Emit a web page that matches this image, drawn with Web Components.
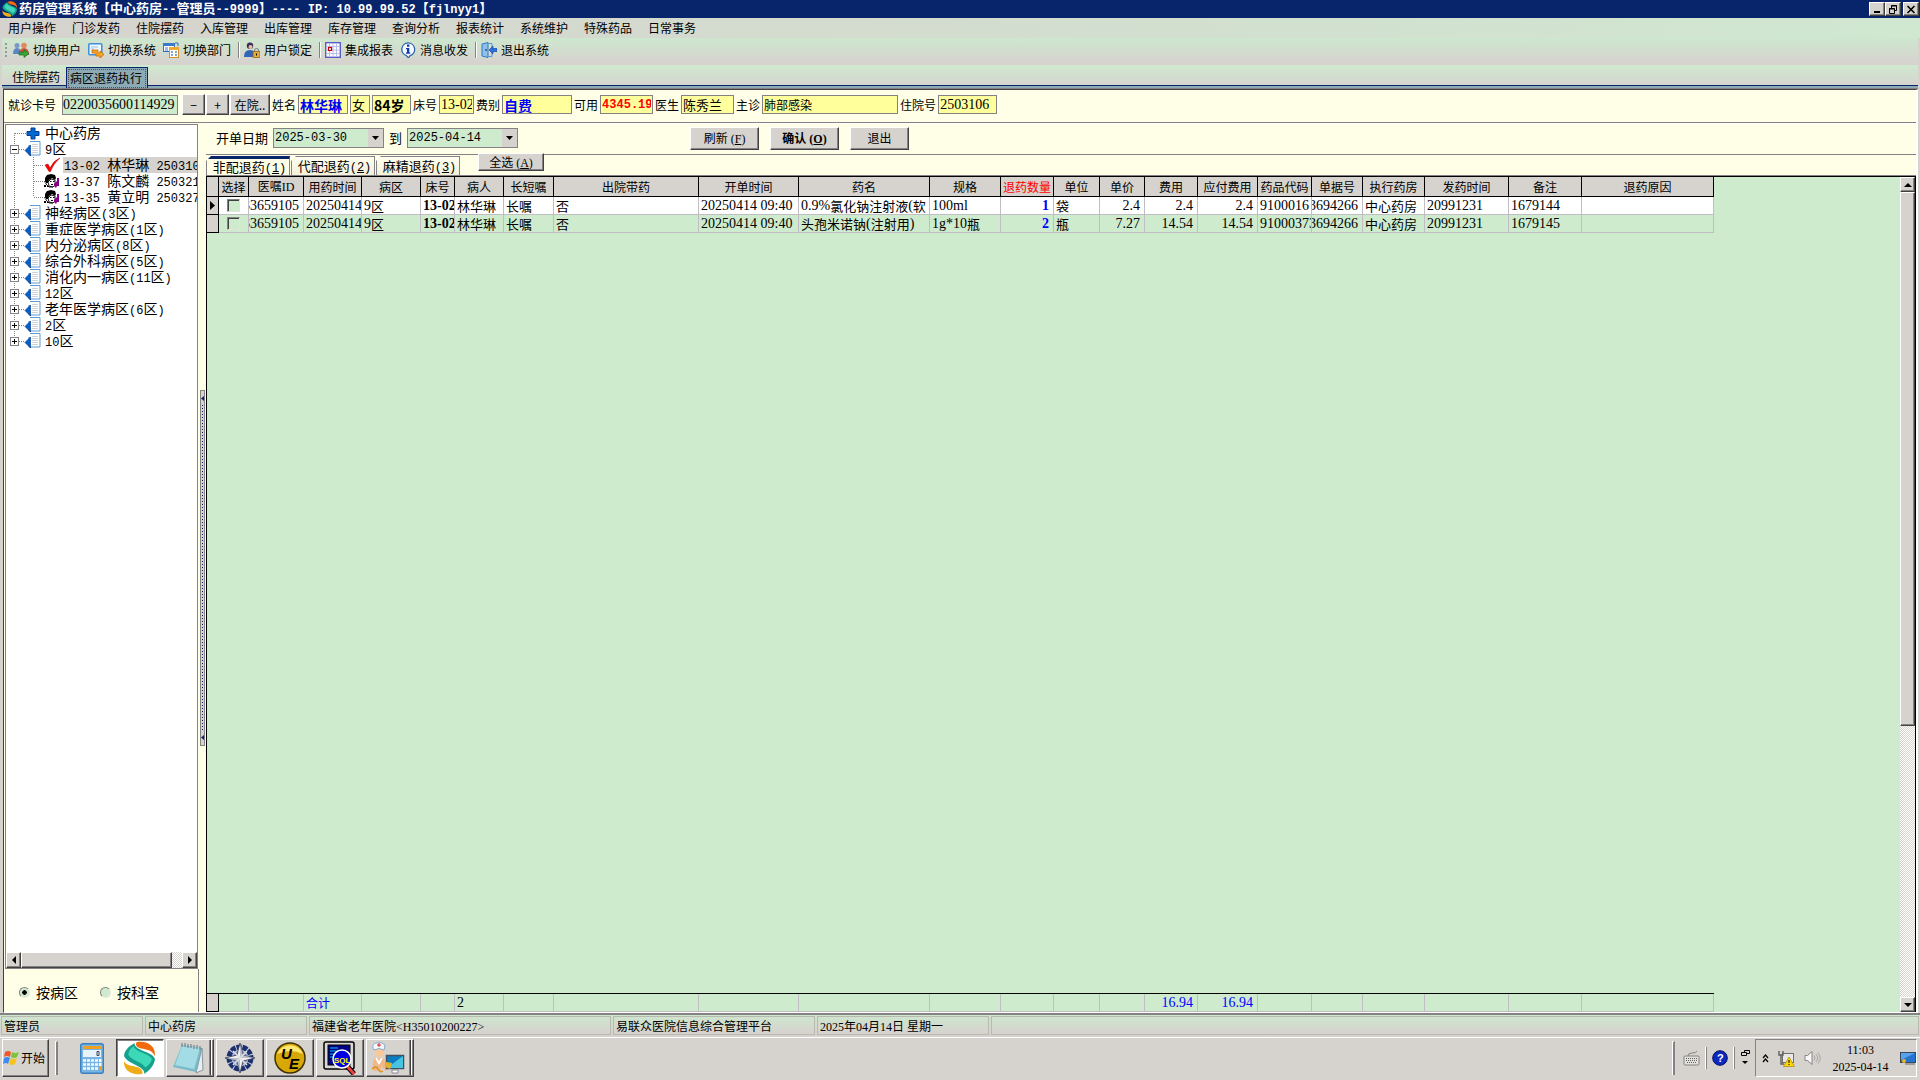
<!DOCTYPE html>
<html lang="zh-CN">
<head>
<meta charset="utf-8">
<title>药房管理系统</title>
<style>
html,body{margin:0;height:100%}
body{
  --face:#d6d3ce;--shade:#848284;--dark:#424142;--navy:#08246b;--green:#ceebce;--cream:#ffffe7;--yellow:#ffff9c;--line:#c0bec4;
  --serif:"Liberation Serif",serif;--mono:"Liberation Mono",monospace;
  font:12px/16px "Noto Sans CJK SC","Liberation Sans",sans-serif;color:#000;background:var(--face);overflow:hidden;cursor:default}
</style>
</head>
<body>
<pharmacy-app></pharmacy-app>
<script>
const BASE = `*{box-sizing:border-box}
.n{font-family:var(--nf,var(--serif));font-size:var(--n,12px);white-space:pre}
button,input{font:inherit;color:inherit;margin:0;border-radius:0;outline:0}
button{padding:0;background:var(--face);border:1px solid;border-color:#fff var(--dark) var(--dark) #fff;box-shadow:inset -1px -1px var(--shade);white-space:nowrap}
svg{display:block;flex:none}`;
const mix = t => t.replace(/[\x20-\x7e]+/g, m => `<span class="n">${m.replace(/</g,'&lt;').replace(/>/g,'&gt;')}</span>`);
const define = (name, css, html) => customElements.define(name, class extends HTMLElement {
  connectedCallback(){
    if (this.shadowRoot) return;
    this.attachShadow({mode:'open'}).innerHTML = `<style>${BASE}${css}</style>` + (typeof html === 'function' ? html(this) : html);
  }
});

const SWIRL = s => `<svg width="${s}" height="${s}" viewBox="0 0 32 32"><path d="M13 1C24-1 31 6 30 14C27 8 22 8 17 7C13 6 11 4 13 1Z" fill="#f26a0c"/><path d="M11 2C10 9 29 10 30 17C30 22 25 28 20 31C22 24 3 21 1 14C1 9 6 4 11 2Z" fill="#17a08c"/><path d="M10 5C12 11 26 12 27 17C27 20 24 23 21 25C19 20 7 18 5 13C5 10 7 7 10 5Z" fill="#3cd8b8"/><path d="M1 19C4 24 10 23 15 25C18 27 19 29 18 31C8 33 0 27 1 19Z" fill="#f0ac18"/></svg>`;

/* ---- title bar ---- */
define('title-bar', `:host{display:flex;align-items:center;height:18px;flex:none;background:var(--navy);color:#fff;font-weight:bold;font-size:13px;--n:12px;--nf:var(--mono);padding:0 1px 0 2px}
h1{font:inherit;margin:0 auto 0 1px;white-space:nowrap}
button{width:16px;height:14px;display:grid;place-items:center;color:#000}
button:last-child{margin-left:2px}`,
`${SWIRL(16)}<h1>${mix('药房管理系统【中心药房--管理员--9999】---- IP: 10.99.99.52【fjlnyy1】')}</h1>
<button aria-label="最小化"><svg width="10" height="9"><path d="M2 6h6v2H2z"/></svg></button>
<button aria-label="还原"><svg width="10" height="9" fill="none" stroke="#000"><path d="M3.500 3V.5h5v5H7M3 1h6M1.500 3.500h5v5h-5zM1 4h6"/></svg></button>
<button aria-label="关闭"><svg width="10" height="9" stroke="#000" stroke-width="1.6"><path d="M1.500 1l7 7M8.500 1l-7 7"/></svg></button>`);

/* ---- menu ---- */
define('menu-bar', `:host{display:flex;height:20px;flex:none;background:linear-gradient(90deg,var(--face),#d0e7d0)}
button{background:none;border:0;box-shadow:none;width:64px}`,
() => ['用户操作','门诊发药','住院摆药','入库管理','出库管理','库存管理','查询分析','报表统计','系统维护','特殊药品','日常事务'].map(t=>`<button>${t}</button>`).join(''));

/* ---- toolbar ---- */
const TOOL = {
 users:`<circle cx="4" cy="3.500" r="2.500" fill="#7a96c8"/><path d="M0 12q0-6 4-6t4 6z" fill="#5b86c8"/><circle cx="11" cy="3.500" r="2.800" fill="#e08a60"/><path d="M6 13q0-7 5-7t5 7z" fill="#d8543c"/><path d="M6 10h5V7.500l5 4-5 4V13H6z" fill="#3aa53a" stroke="#14701e" stroke-width=".7"/>`,
 system:`<rect x=".8" y="1.800" width="13" height="11" rx="1" fill="#eef6ff" stroke="#3e8fd8" stroke-width="1.500"/><path d="M3 5h7M3 7h3" stroke="#9cc4e8"/><path d="M4 8h6v3h2V9l4 3.500-4 3.500v-2H8v-3H4z" fill="#f5a623" stroke="#c86a08" stroke-width=".8"/>`,
 dept:`<rect x=".5" y="1.500" width="11" height="8" fill="#fff" stroke="#2e6fc0"/><path d="M0 1h12v3H0z" fill="#3c78c8"/><path d="M2 6h3M2 8h3" stroke="#3c78c8"/><rect x="6.500" y="5.500" width="9" height="10" fill="#fff" stroke="#d89020"/><path d="M6 5h10v3H6z" fill="#f0a830"/><path d="M8 10h2m2 0h2M8 13h2m2 0h2" stroke="#6088b8" stroke-width="1.500"/><path d="M12 1h3v3" fill="none" stroke="#2e6fc0"/>`,
 lock:`<circle cx="6" cy="3.800" r="3.200" fill="#3a2e58"/><circle cx="6.500" cy="5" r="2" fill="#eac09a"/><path d="M0 15q0-7 6-7t6 7z" fill="#2f66b8"/><path d="M10.500 10V8.500a2 2 0 014 0V10" fill="none" stroke="#888" stroke-width="1.200"/><rect x="9" y="9.500" width="7" height="6" fill="#e8a838" stroke="#8a5a10" stroke-width=".7"/><path d="M12 11.500h1v2h-1z"/>`,
 report:`<rect x=".7" y=".7" width="14.600" height="14.600" fill="#fff" stroke="#5a5ac8" stroke-width="1.400"/><path d="M1 4.500h14M1 8h14M1 11.500h14M4.500 1v14M8 1v14M11.500 1v14" stroke="#b8bce8"/><rect x="3.500" y="5.500" width="3" height="3" fill="#fff" stroke="#c80000" stroke-width="1.200"/>`,
 info:`<path d="M8 .8a6.600 6.600 0 012 12.900l-1.500 2.200-2-2.200A6.600 6.600 0 018 .8z" fill="#f4faff" stroke="#2a62a8" stroke-width="1.300"/><path d="M7 2.500h2.400v2.200H7zM6 6h3.300v4.500h1v1.200H6v-1.200h1V7.200H6z" fill="#103cb0"/>`,
 exit:`<path d="M1 2l6-1.500v15L1 14z" fill="#8ec0ee" stroke="#2f78c0"/><path d="M7 1.500h4v4M7 14.500h4v-4" fill="none" stroke="#5898d8"/><circle cx="5" cy="8" r=".9" fill="#204880"/><path d="M8 8l4-4v2.500h4v3h-4V12z" fill="#2a6ee0" stroke="#103c98" stroke-width=".6"/>`};
define('tool-button', `:host{display:block}button{display:flex;align-items:center;gap:4px;height:20px;border:0;background:none;box-shadow:none}`,
 el => `<button><svg width="16" height="16" viewBox="0 0 16 16">${TOOL[el.getAttribute('icon')]}</svg><slot></slot></button>`);
define('tool-bar', `:host{display:flex;align-items:center;gap:7px;height:24px;flex:none;margin:0 2px 3px;padding-left:3px;background:linear-gradient(#cee7ce,var(--face))}
i{width:2px;height:16px;border-left:1px solid var(--shade);border-right:1px solid #fff;margin:0 -3px 0 0}
.grip{border:0;margin:0 -1px 0 0;height:14px;background:repeating-linear-gradient(#9a9a94 0 2px,transparent 2px 4px)}`,
`<i class="grip"></i><tool-button icon="users">切换用户</tool-button><tool-button icon="system">切换系统</tool-button><tool-button icon="dept">切换部门</tool-button><i></i><tool-button icon="lock">用户锁定</tool-button><i></i><tool-button icon="report">集成报表</tool-button><tool-button icon="info">消息收发</tool-button><i></i><tool-button icon="exit">退出系统</tool-button>`);

/* ---- page tabs ---- */
define('page-tabs', `:host{display:flex;flex:none;height:23px;margin:0 2px;padding:2px 0 0;background:linear-gradient(#d0e9d0,var(--face));border-bottom:2px solid #8caab5;position:relative}
:host::after{content:"";position:absolute;left:0;right:0;bottom:0;height:1px;background:var(--navy)}
button{background:none;border:0;box-shadow:none;padding:0 6px 2px 10px;height:21px}
button[aria-selected=true]{background:#8caab5;border:1px solid var(--navy);border-bottom:0;padding:0 0 0 2px;position:relative;z-index:1;width:82px;text-align:left}
span{display:block;width:76px;height:17px;outline:1px dotted #5c4a4a;padding-left:1px;line-height:16px}`,
`<button role="tab" aria-selected="false">住院摆药</button><button role="tab" aria-selected="true"><span>病区退药执行</span></button>`);

/* ---- patient bar ---- */
define('patient-bar', `:host{display:flex;align-items:center;gap:2px;flex:none;height:33px;padding:0 0 3px 4px;background:var(--cream);border-bottom:1px solid var(--shade)}
label{white-space:nowrap}
input{height:19px;padding:0 1px;border:1px solid var(--shade);background:var(--yellow);font-size:13px}
.m{font-family:var(--serif);font-size:14px}
.w{font-family:var(--mono);font-size:12px;font-weight:bold}
#card{width:116px;height:20px;padding:0;background:var(--green);margin-left:4px}
button{height:21px;width:23px}
.g{display:flex;gap:1px;margin:0 0 0 2px}.g :last-child{width:40px;overflow:hidden}
.b{font-weight:bold;font-size:14px}`,
`<label for="card">就诊卡号</label><input id="card" class="m" value="0220035600114929"><div class="g"><button>−</button><button>+</button><button>在院..</button></div>
<label for="nm">姓名</label><input id="nm" class="b" style="width:50px;color:#00f" value="林华琳"><input aria-label="性别" style="width:20px" value="女"><input aria-label="年龄" class="b" style="width:39px" value="84岁">
<label for="bed">床号</label><input id="bed" class="m" style="width:35px" value="13-02"><label for="fee">费别</label><input id="fee" class="b" style="width:70px;color:#00f" value="自费">
<label for="bal">可用</label><input id="bal" class="w" style="width:53px;color:#f00" value="4345.19"><label for="doc">医生</label><input id="doc" style="width:53px" value="陈秀兰">
<label for="dx">主诊</label><input id="dx" style="width:136px;font-size:12px" value="肺部感染"><label for="hn">住院号</label><input id="hn" class="m" style="width:59px" value="2503106">`);

/* ---- scroll bar ---- */
define('scroll-bar', `:host{display:flex;flex:none;width:15px;flex-direction:column;background:repeating-conic-gradient(#fff 0 25%,var(--face) 0 50%) 0 0/2px 2px}
:host([horizontal]){width:auto;height:16px;flex-direction:row}
button{flex:none;width:15px;height:15px;display:grid;place-items:center}
:host([horizontal]) button{height:16px}
div{flex:none;height:64%;background:var(--face);border:1px solid;border-color:#fff var(--dark) var(--dark) #fff;box-shadow:inset -1px -1px var(--shade)}
:host([horizontal]) div{height:auto;width:151px}
button:last-child{margin-top:auto}:host([horizontal]) button:last-child{margin:0 0 0 auto}`,
 el => { const h = el.hasAttribute('horizontal');
 return `<button aria-label="${h?'向左':'向上'}"><svg width="8" height="8"><path d="${h?'M6 0v8L2 4z':'M0 6h8L4 2z'}"/></svg></button><div></div><button aria-label="${h?'向右':'向下'}"><svg width="8" height="8"><path d="${h?'M2 0v8l4-4z':'M0 2h8L4 6z'}"/></svg></button>`; });

/* ---- ward tree ---- */
const DOT = 'stroke="#848284" stroke-dasharray="1 1"';
const sheet = `<path d="M24 .5h10v13.500H23V4" fill="#fff" stroke="#5a9ad6"/><path d="M26 3.500h6M26 5.500h6M26 7.500h6M26 9.500h6M26 11.500h6" stroke="#d0d4d8"/><path d="M19 9.500L24.500 4v11z" fill="#0060c8" stroke="#083c90" stroke-width=".7"/>`;
const box = (open,last) => `<path d="M8.500 0v${last?8:16}" ${DOT}/><path d="M13 8.500h6" ${DOT}/><rect x="4.500" y="4.500" width="8" height="8" fill="#fff" stroke="#848284"/><path d="M6 8.500h5${open?'':'M8.500 6v5'}" stroke="#000"/>`;
const stem = last => `<path d="M8.500 0v16M27.500 0v${last?8:16}M28 8.500h9" ${DOT} fill="none"/>`;
const tick = `<path d="M39 8l3-1 2 4Q48 3 54 1 47 7 44.500 14.500H43z" fill="#f00" stroke="#a00" stroke-width=".5"/>`;
const face = `<path d="M39 5l2-3 4-1 4 1 1 3-1 2-3-2-3 2-1 3-3-2z"/><path d="M38 9l2-1v3l3 3h4M45 6l4 1v5l-2 2-4-1-1-4z" fill="#fff" stroke="#000" stroke-width=".9"/><path d="M40 7h2v3h-2zM44 8h1.500v1H44zM47 8h1.500v1H47zM45 11h2v1h-2zM38 12h2v2h-2zM41 13h2v1h-2z"/><path d="M48 11l3-3V5h2v8h-2l-1 2-2-2z" fill="#840084"/>`;
define('tree-row', `:host{display:flex;height:16px;line-height:15px;font-size:14px;--n:12px;--nf:var(--mono);white-space:nowrap}span.t{flex:1;padding-left:1px}:host([selected]) .t{background:var(--face)}`,
 el => { const k = el.getAttribute('kind'), last = el.hasAttribute('last');
 const art = {root:`<path d="M8.500 8v8M9 8.500h11" ${DOT} fill="none"/><path d="M25 3h4v3.500h4v4h-4V14h-4v-3.500h-4v-4h4z" fill="#0068d0" stroke="#003c90"/>`,
  open:box(1,0)+sheet, ward:box(0,last)+sheet, tick:stem(last)+tick, face:stem(last)+face}[k];
 const w = k==='tick'||k==='face' ? 57 : 38;
 return `<svg width="${w}" height="16" viewBox="0 0 ${w} 16">${art}</svg><span class="t">${mix(el.getAttribute('label'))}</span>`; });
define('ward-tree', `:host{display:flex;flex-direction:column;flex:none;width:195px;padding:1px 0 0 1px;background:var(--cream)}
.box{flex:1;min-height:0;display:flex;flex-direction:column;background:#fff;border:1px solid var(--shade);margin-right:1px}
.rows{flex:1;overflow:hidden}
.by{height:43px;padding:3px 0 0 14px;display:flex;align-items:center;gap:22px;font-size:14px;border-right:1px solid var(--shade)}
label{display:flex;align-items:center;gap:6px;white-space:nowrap}
input{appearance:none;width:11px;height:11px;border-radius:50%;border:1px solid;border-color:var(--shade) #e8e8e0 #e8e8e0 var(--shade);background:var(--green)}
input:checked{background:radial-gradient(#000 0 2px,var(--green) 2.500px)}`,
 () => { const R = [['root','中心药房'],['open','9区'],['tick','13-02 林华琳 250310','selected'],['face','13-37 陈文麟 250321'],['face','13-35 黄立明 250327','last'],['ward','神经病区(3区)'],['ward','重症医学病区(1区)'],['ward','内分泌病区(8区)'],['ward','综合外科病区(5区)'],['ward','消化内一病区(11区)'],['ward','12区'],['ward','老年医学病区(6区)'],['ward','2区'],['ward','10区','last']];
 return `<div class="box"><div class="rows">${R.map(r=>`<tree-row kind="${r[0]}" label="${r[1]}" ${r[2]||''}></tree-row>`).join('')}</div><scroll-bar horizontal></scroll-bar></div>
<div class="by" role="radiogroup" aria-label="分组方式"><label><input type="radio" name="by" checked>按病区</label><label><input type="radio" name="by">按科室</label></div>`; });

/* ---- splitter ---- */
define('pane-splitter', `:host{display:flex;align-items:center;flex:none;width:7px;padding:0 1px;background:var(--cream)}
div{width:5px;height:356px;border:1px solid var(--shade);background:var(--face);display:flex;flex-direction:column;align-items:center;justify-content:space-between;padding:5px 0}
i{flex:1;width:1px;margin:4px 0;background:repeating-linear-gradient(var(--navy) 0 1px,transparent 1px 3px)}`,
`<div><svg width="3" height="5"><path d="M3 0v5L0 2.500z" fill="#08246b"/></svg><i></i><svg width="3" height="5"><path d="M3 0v5L0 2.500z" fill="#08246b"/></svg></div>`);

/* ---- date field and filter row ---- */
define('date-field', `:host{display:flex;width:111px;height:20px;border:1px solid var(--shade);background:var(--green)}
input{flex:1;min-width:0;border:0;background:none;padding:0 1px;font:12px var(--mono)}
button{width:15px;border:0;box-shadow:none;display:grid;place-items:center}`,
 el => `<input aria-label="${el.getAttribute('label')}" value="${el.getAttribute('value')}"><button aria-label="选择日期"><svg width="7" height="4"><path d="M0 0h7L3.500 4z"/></svg></button>`);
define('filter-bar', `:host{display:flex;align-items:center;height:32px;flex:none;gap:5px;padding:0 0 2px 10px;background:var(--cream);border-top:1px solid #fff;border-bottom:1px solid var(--shade)}
.l{font-size:13px}.a{display:flex;gap:11px;margin-left:167px}button{width:69px;height:23px}button:last-child{width:59px}`,
`<span class="l">开单日期</span><date-field label="开单日期起" value="2025-03-30"></date-field><span class="l">到</span><date-field label="开单日期止" value="2025-04-14"></date-field>
<div class="a"><button>刷新<span class="n"> (<u>F</u>)</span></button><button style="font-weight:bold">确认<span class="n"> (<u>O</u>)</span></button><button>退出</button></div>`);
define('grid-tabs', `:host{display:flex;align-items:flex-end;gap:1px;height:21px;flex:none;background:var(--cream);border-bottom:1px solid var(--shade);font-size:13px;--n:12px;--nf:var(--mono)}
button{width:84px;height:19px;background:linear-gradient(#fffff0,#f4f0d8);border:1px solid var(--shade);border-width:1px 1px 0;box-shadow:none;clip-path:polygon(5px 0,100% 0,100% 100%,0 100%,0 5px);line-height:18px;padding-left:3px}
button[aria-selected=true]{border-top:3px solid var(--navy);background:var(--cream);line-height:16px}
.all{clip-path:none;width:66px;height:18px;align-self:flex-start;margin:-2px 0 0 17px;padding:0;line-height:14px;background:var(--face);font-size:12px;--nf:var(--serif);border:1px solid;border-color:#fff var(--dark) var(--dark) #fff;box-shadow:inset -1px -1px var(--shade);position:relative}`,
`<button role="tab" aria-selected="true">非配退药<span class="n">(<u>1</u>)</span></button><button role="tab">代配退药<span class="n">(<u>2</u>)</span></button><button role="tab">麻精退药<span class="n">(<u>3</u>)</span></button><button class="all">全选<span class="n"> (<u>A</u>)</span></button>`);

/* ---- data grid ---- */
const COLS = [['',12],['选择',30],['医嘱ID',55],['用药时间',58],['病区',59],['床号',34],['病人',49],['长短嘱',50],['出院带药',145],['开单时间',100],['药名',131],['规格',71],['退药数量',53],['单位',46],['单价',45],['费用',53],['应付费用',60],['药品代码',54],['单据号',51],['执行药房',62],['发药时间',84],['备注',73],['退药原因',132]];
const DATA = [
 ['▶','','33659105','20250414','9区','13-02','林华琳','长嘱','否','20250414 09:40','0.9%氯化钠注射液(软','100ml','1','袋','2.4','2.4','2.4','9100016','3694266','中心药房','20991231','1679144',''],
 ['','','33659105','20250414','9区','13-02','林华琳','长嘱','否','20250414 09:40','头孢米诺钠(注射用)','1g*10瓶','2','瓶','7.27','14.54','14.54','91000373','3694266','中心药房','20991231','1679145','']];
define('drug-grid', `:host{display:flex;flex:1;min-height:0;background:var(--green);border:1px solid #000;border-width:1px 1px 0 1px}
.area{flex:1;min-width:0;display:flex;flex-direction:column;justify-content:space-between;overflow:hidden}
table{table-layout:fixed;border-spacing:0;width:1507px;font-size:13px;--n:14px}
th{height:20px;padding:0;font-weight:normal;font-size:12px;--n:12px;background:var(--face);border-right:1px solid #000;border-bottom:1px solid #000;white-space:nowrap;overflow:hidden}
th.red{color:#f00}
td{height:18px;padding:0;border-right:1px solid var(--line);border-bottom:1px solid var(--line)}
td div{height:17px;line-height:17px;overflow:hidden;white-space:nowrap;display:flex;padding:0 0 0 2px}
td .r{justify-content:flex-end;padding:0 4px 0 0}
tbody tr:first-child td{background:#fff}
table tr td:first-child{background:var(--face);border-color:#000}
.b,.q{font-weight:bold}.q{color:#00f}
.foot{border-top:1px solid #000}
.foot td{background:var(--green)!important}
.foot td:first-child{background:var(--face)!important}.foot .q{font-weight:normal;font-size:12px}
input{appearance:none;display:block;width:13px;height:13px;margin:0 auto;border:1px solid;border-color:var(--shade) #e4e2dc #e4e2dc var(--shade);box-shadow:inset 1px 1px #424142;background:var(--green)}
svg{margin:4px 0 0 1px}`,
 () => { const cg = `<colgroup>${COLS.map(c=>`<col style="width:${c[1]}px">`).join('')}</colgroup>`;
 const right = new Set([2,12,14,15,16,18]);
 const cell = (t,i) => i===0 ? `<td><div style="padding:0">${t?'<svg width="8" height="9"><path d="M2 0v9l5-4.500z"/></svg>':''}</div></td>` : i===1 ? '<td><input type="checkbox" aria-label="选择"></td>'
   : `<td><div class="${right.has(i)?'r ':''}${i===12?'q':i===5?'b':''}">${mix(t)}</div></td>`;
 const sums = {3:'合计',6:'2',15:'16.94',16:'16.94'};
 return `<div class="area"><table>${cg}<thead><tr>${COLS.map((c,i)=>`<th class="${i===12?'red':''}">${mix(c[0])}</th>`).join('')}</tr></thead><tbody>${DATA.map(r=>`<tr>${r.map(cell).join('')}</tr>`).join('')}</tbody></table>
<table class="foot">${cg}<tr>${COLS.map((c,i)=>`<td><div class="${i>6?'r ':''}${i===6?'':'q'}">${mix(sums[i]||'')}</div></td>`).join('')}</tr></table></div><scroll-bar></scroll-bar>`; });

/* ---- status bar ---- */
define('status-bar', `:host{display:flex;gap:2px;flex:none;height:24px;padding:1px 1px 2px;border-top:2px solid var(--shade);background:linear-gradient(#cee7ce,var(--face) 80%)}
span:not(.n){border:1px solid #b8bab0;padding:0 2px;width:172px;line-height:17px;white-space:nowrap}`,
 () => [['管理员',142],['中心药房',162],['福建省老年医院<H35010200227>',302],['易联众医院信息综合管理平台',202],['2025年04月14日 星期一',172],['',0]].map(([t,w])=>`<span style="${w?`width:${w}px`:'flex:1'}">${mix(t)}</span>`).join(''));

/* ---- task bar ---- */
const APP = {
 swirl:SWIRL(34),
 note:`<svg width="34" height="32" viewBox="0 0 34 32"><path d="M11 3l20 3-6 24L2 25z" fill="#78bccc"/><path d="M11 4l18 2-6 21L4 23z" fill="#a4dce6"/><path d="M31 6l1 22-7 3z" fill="#e8eef0" stroke="#8898a0"/><path d="M11 1v4m3-4v4m3-3v4m3-4v4m3-3v4m3-4v4m3-3v4" stroke="#68747c"/></svg>`,
 compass:`<svg width="30" height="30" viewBox="0 0 30 30"><circle cx="15" cy="15" r="11" fill="#b8c0d8" stroke="#1c2f70" stroke-width="5" stroke-dasharray="5 1"/><circle cx="15" cy="15" r="7" fill="#7888b8"/><path d="M15 0l3 12 12 3-12 3-3 12-3-12L0 15l12-3z" fill="#f0f0f0" stroke="#303850" stroke-width=".8"/><path d="M15 0v30l-3-12L0 15h30l-12-3z" fill="#98a0b4" opacity=".6"/><path d="M8 8l14 14M22 8L8 22" stroke="#e0e0e0" stroke-width="1.500"/></svg>`,
 ue:`<svg width="32" height="32" viewBox="0 0 32 32"><circle cx="16" cy="16" r="15" fill="#d8a808" stroke="#403000" stroke-width="1.500"/><path d="M3 12a14 14 0 0126 0Q16 6 3 12" fill="#ffe870"/><text x="7" y="17" font-family="Liberation Sans" font-weight="bold" font-style="italic" font-size="15">U</text><text x="15" y="27" font-family="Liberation Sans" font-weight="bold" font-style="italic" font-size="15">E</text></svg>`,
 sql:`<svg width="34" height="34" viewBox="0 0 34 34"><rect x="1" y="1" width="30" height="27" rx="2" fill="#d8d8d8" stroke="#000" stroke-width="1.500"/><rect x="5" y="4" width="22" height="20" fill="#000084" stroke="#000"/><path d="M7 7h8M7 10h12M7 13h6M7 16h5" stroke="#00c8ff"/><path d="M24 25l7 8" stroke="#000" stroke-width="5"/><path d="M24 25l7 8" stroke="#f04040" stroke-width="3"/><circle cx="19" cy="18" r="9" fill="#0000e0" stroke="#fff" stroke-width="1.500"/><text x="11" y="22" font-family="Liberation Sans" font-weight="bold" font-size="8" fill="#ff0">SQL</text></svg>`,
 nurse:`<svg width="34" height="34" viewBox="0 0 34 34"><path d="M4 9q-1 6 4 7 6-1 5-8z" fill="#f8c898"/><path d="M2 7q-1-4 3-5 5-2 9 2l-1 5q-5-3-10 0z" fill="#f4f8ff" stroke="#88a8d0"/><path d="M8 2v4M6 4h4" stroke="#e02020"/><path d="M4 16q4 2 7 0 3 2 3 6l4 4-3 4-5-5v5H2q-1-9 2-14z" fill="#f0b888"/><path d="M5 17l3 5 3-5" stroke="#fff" stroke-width="2" fill="none"/><path d="M1 28q4-4 6 0t5 2" stroke="#d89020" stroke-width="1.500" fill="none"/><rect x="15.500" y="14.500" width="17" height="13" fill="#0c7cc0" stroke="#405060" stroke-width="1.500"/><path d="M16 27l16-12v12z" fill="#48c4e0"/><path d="M21 29h6v3h-6z" fill="#fff" stroke="#889"/><path d="M15 21l6 1-2 6-5-2z" fill="#e0b030"/></svg>`};
define('task-button', `:host{display:block;width:48px;height:38px}button{width:48px;height:38px;display:grid;place-items:center}
:host([active]) button{background:#fff;border-color:var(--dark) #fff #fff var(--dark);box-shadow:inset 1px 1px var(--shade)}
:host([stacked]) button{padding-right:4px;background:linear-gradient(90deg,transparent 0 42px,var(--shade) 42px 43px,var(--dark) 43px 44px,#fff 44px 45px,transparent 45px)}`,
 el => `<button aria-label="${el.title}">${APP[el.getAttribute('icon')]}</button>`);
define('task-bar', `:host{display:flex;align-items:center;flex:none;height:43px;padding:0 3px 2px 2px;border-top:1px solid #fff;background:var(--face)}
.start{width:47px;height:38px;display:flex;align-items:center;gap:1px}
i{width:3px;border-left:1px solid #fff;border-top:1px solid #fff;border-right:2px solid var(--shade);height:34px}
.apps{display:flex;gap:2px;margin-right:auto}
.calc{border:0;box-shadow:none;background:none;margin:0 12px 0 22px;width:24px}
.tray{display:flex;align-items:center;height:38px;border:1px solid;border-color:var(--shade) #fff #fff var(--shade);padding-left:6px;gap:9px;margin-left:3px;width:162px}
.s{width:2px;height:22px;border:0;border-left:1px solid #fff;border-right:1px solid var(--shade)}
time{flex:1;text-align:center;line-height:16px;white-space:nowrap}
.lang{display:flex;align-items:center;gap:5px;margin-left:8px}`,
`<button class="start"><svg width="17" height="16" viewBox="0 0 17 16"><path d="M2 2q3-2 6 0L7 7Q4 5 1 7z" fill="#f0582c"/><path d="M9 2q3 2 7 0l-2 5q-3 2-6 0z" fill="#7cc43c"/><path d="M1 8q3-2 6 0l-2 6Q3 12 0 14z" fill="#3c8cf0"/><path d="M8 8q3 2 6 0l-2 6q-3 2-6 0z" fill="#f8c41c"/></svg>开始</button><i style="margin-left:6px"></i>
<button class="calc" aria-label="计算器"><svg width="24" height="31" viewBox="0 0 24 31"><rect x=".7" y=".7" width="22.600" height="29.600" rx="2" fill="#78b4e4" stroke="#3c80bc" stroke-width="1.400"/><rect x="3" y="3" width="18" height="3" fill="#f0a020"/><rect x="3" y="7" width="18" height="7" fill="#e8f4fc"/><path d="M17 8.500h2v4h-2z" fill="none" stroke="#345"/><path d="M3 17.500h15M3 21.500h15M3 25.500h15" stroke="#f4faff" stroke-width="2.600" stroke-dasharray="3 1"/><path d="M19 16h2.500v3H19zM19 20h2.500v3H19z" fill="#fff"/><path d="M19 23h2.500v4H19z" fill="#f0a020"/></svg></button>
<div class="apps"><task-button icon="swirl" active title="药房管理系统"></task-button><task-button icon="note" stacked title="记事本"></task-button><task-button icon="compass" title="导航"></task-button><task-button icon="ue" title="编辑器"></task-button><task-button icon="sql" title="查询"></task-button><task-button icon="nurse" stacked title="护士站"></task-button></div>
<i></i><div class="lang"><svg width="17" height="16" viewBox="0 0 17 16" fill="none" stroke="#848284"><rect x="1" y="6" width="15" height="9" rx="1" fill="#e4e2de"/><path d="M3 8.500h11M3 10.500h11M4 12.500h9" stroke-dasharray="1 1" stroke="#606060"/><path d="M5 6q0-3 4-3t5-2"/></svg><i class="s"></i>
<svg width="16" height="16" viewBox="0 0 16 16"><circle cx="8" cy="8" r="7.300" fill="#0c28c0" stroke="#001060"/><text x="5" y="12" font-family="Liberation Sans" font-weight="bold" font-size="11" fill="#fff">?</text></svg><i class="s"></i>
<svg width="12" height="18" fill="none" stroke="#000"><path d="M4.500 4V1.500h5v3H7M1.500 3.500h5v3h-5z"/><path d="M2 12h6L5 15z" fill="#000" stroke="none"/></svg></div>
<div class="tray"><svg width="7" height="9" fill="none" stroke="#000" stroke-width="1.200"><path d="M1 4l2.500-3L6 4M1 8l2.500-3L6 8"/></svg>
<svg width="17" height="17" viewBox="0 0 17 17"><rect x="4.500" y="3.500" width="11" height="9" fill="#e8e8e4" stroke="#707070"/><path d="M1 1v4h4V1M3 5v9h3" fill="none" stroke="#606060" stroke-width="1.400"/><path d="M11 7l5.500 9.500h-11z" fill="#ffd800" stroke="#a07800" stroke-width=".6"/><path d="M10.500 10h1v3h-1zM10.500 14h1v1h-1z"/></svg>
<svg width="17" height="16" viewBox="0 0 17 16" fill="none" stroke="#848284"><path d="M1 5.500h2.500L8 1.500v13l-4.500-4H1z" fill="#f8f8f8"/><path d="M10 5.500q2 2.500 0 5M12 4q3.500 4 0 8M14 2.500q4.500 5.500 0 11" stroke="#a8a6a4"/></svg>
<time><span class="n">11:03</span><br><span class="n">2025-04-14</span></time>
<svg width="16" height="14" viewBox="0 0 16 14"><rect x=".5" y="1.500" width="15" height="10" fill="#2474d0" stroke="#384860"/><path d="M1 2h14L1 9z" fill="#58a4ec"/><circle cx="4" cy="10" r="2" fill="#f0b020"/><path d="M5 13h10" stroke="#606870"/></svg></div>`);

/* ---- application frame ---- */
define('pharmacy-app', `:host{display:flex;flex-direction:column;height:100vh}
main{flex:1;min-height:0;display:flex;flex-direction:column;margin:1px 2px 0 3px;border:1px solid var(--dark);border-width:1px 2px 1px 1px;border-right-color:#fff;border-bottom-color:#fff;box-shadow:0 -1px var(--shade)}
.split{flex:1;min-height:0;display:flex}
.work{flex:1;min-width:0;display:flex;flex-direction:column}`,
`<title-bar></title-bar><menu-bar></menu-bar><tool-bar></tool-bar><page-tabs></page-tabs>
<main><patient-bar></patient-bar><div class="split"><ward-tree></ward-tree><pane-splitter></pane-splitter><div class="work"><filter-bar></filter-bar><grid-tabs></grid-tabs><drug-grid></drug-grid></div></div></main>
<status-bar></status-bar><task-bar></task-bar>`);
</script>
</body>
</html>
